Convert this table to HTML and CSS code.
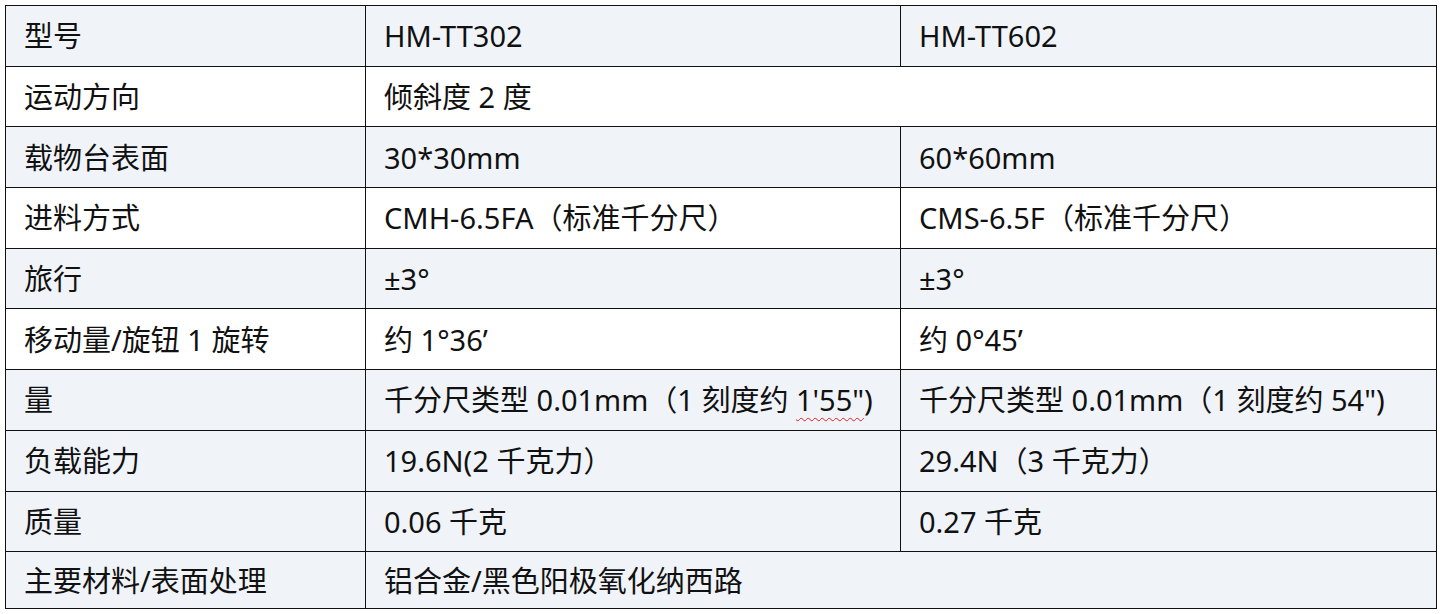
FILE: index.html
```html
<!DOCTYPE html>
<html lang="zh-CN">
<head>
<meta charset="utf-8">
<title>规格</title>
<link rel="stylesheet" href="styles.css">
</head>
<body>
<div class="wrap">
<table class="spec">
  <colgroup>
    <col class="c1"><col class="c2"><col class="c3">
  </colgroup>
  <tbody>
    <tr class="shade"><td>型号</td><td>HM-TT302</td><td>HM-TT602</td></tr>
    <tr class="plain"><td>运动方向</td><td colspan="2">倾斜度 2 度</td></tr>
    <tr class="shade"><td>载物台表面</td><td>30*30mm</td><td>60*60mm</td></tr>
    <tr class="plain"><td>进料方式</td><td>CMH-6.5FA（标准千分尺）</td><td>CMS-6.5F（标准千分尺）</td></tr>
    <tr class="shade"><td>旅行</td><td>±3°</td><td>±3°</td></tr>
    <tr class="plain"><td>移动量/旋钮 1 旋转</td><td>约 1°36’</td><td>约 0°45’</td></tr>
    <tr class="shade"><td>量</td><td>千分尺类型 0.01mm（1 刻度约 <span class="spell">1'55"</span>)</td><td>千分尺类型 0.01mm（1 刻度约 54")</td></tr>
    <tr class="shade"><td>负载能力</td><td>19.6N(2 千克力）</td><td>29.4N（3 千克力）</td></tr>
    <tr class="shade"><td>质量</td><td>0.06 千克</td><td>0.27 千克</td></tr>
    <tr class="shade last"><td>主要材料/表面处理</td><td colspan="2">铝合金/黑色阳极氧化纳西路</td></tr>
  </tbody>
</table>
</div>
</body>
</html>
```
FILE: styles.css
```css
html, body {
  margin: 0;
  padding: 0;
  background: #ffffff;
}
.wrap {
  padding: 5px 6px 0 5px;
}
.spec {
  border-collapse: collapse;
  table-layout: fixed;
  width: 1431px;
  font-family: "Noto Sans", "Noto Sans CJK SC", sans-serif;
  font-size: 29px;
  color: #111;
}
.c1 { width: 360px; }
.c2 { width: 535px; }
.c3 { width: 536px; }
.spec td {
  border: 1px solid #111;
  height: 60.7px;
  padding: 0 0 0 18px;
  vertical-align: middle;
  white-space: nowrap;
  line-height: 1;
  box-sizing: border-box;
}
.spec tr.last td {
  height: 57px;
}
.shade td { background: #f0f4f9; }
.plain td { background: #ffffff; }
.spell {
  text-decoration: underline wavy #e02020;
  text-decoration-thickness: 1px;
  text-underline-offset: 6px;
}
```
